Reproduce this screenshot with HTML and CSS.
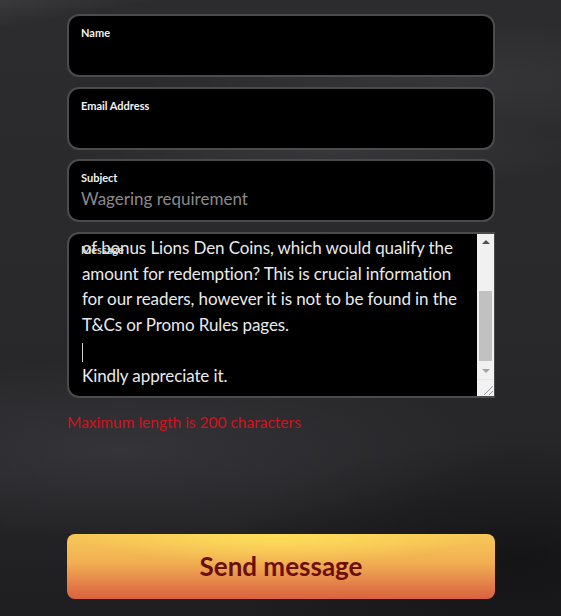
FILE: index.html
```html
<!DOCTYPE html>
<html lang="en">
<head>
<meta charset="utf-8">
<title>Contact form</title>
<link rel="stylesheet" href="styles.css">
</head>
<body>
<form class="form">
  <div class="field">
    <label class="label">Name</label>
  </div>
  <div class="field">
    <label class="label">Email Address</label>
  </div>
  <div class="field">
    <label class="label">Subject</label>
    <div class="value">Wagering requirement</div>
  </div>
  <div class="field field-message">
    <label class="label label-overlay">Message</label>
    <div class="message-text">
      <div class="line">of bonus Lions Den Coins, which would qualify the</div>
      <div class="line">amount for redemption? This is crucial information</div>
      <div class="line">for our readers, however it is not to be found in the</div>
      <div class="line">T&amp;Cs or Promo Rules pages.</div>
      <div class="line"><span class="caret"></span></div>
      <div class="line">Kindly appreciate it.</div>
    </div>
    <div class="scrollbar">
      <div class="sb-btn"><span class="arrow-up"></span></div>
      <div class="sb-track"><div class="sb-thumb"></div></div>
      <div class="sb-btn"><span class="arrow-down"></span></div>
      <div class="sb-corner">
        <svg width="15" height="15" viewBox="0 0 15 15"><path d="M14 5 L5 14 M14 10 L10 14" stroke="#9a9a9a" stroke-width="1"/></svg>
      </div>
    </div>
  </div>
  <div class="error">Maximum length is 200 characters</div>
  <button type="button" class="send">Send message</button>
</form>
</body>
</html>
```
FILE: styles.css
```css
html, body {
  margin: 0;
  padding: 0;
}
body {
  width: 561px;
  height: 616px;
  overflow: hidden;
  font-family: Lato, "Open Sans", sans-serif;
  background:
    linear-gradient(170deg, rgba(70,70,72,0.55) 0%, rgba(40,40,42,0) 4%),
    radial-gradient(ellipse 260px 40px at 330px 150px, rgba(80,80,84,0.35), rgba(0,0,0,0)),
    radial-gradient(ellipse 300px 60px at 450px 80px, rgba(70,70,74,0.4), rgba(0,0,0,0)),
    radial-gradient(ellipse 380px 90px at 120px 450px, rgba(70,70,76,0.45), rgba(0,0,0,0)),
    radial-gradient(ellipse 300px 120px at 520px 560px, rgba(10,10,12,0.55), rgba(0,0,0,0)),
    linear-gradient(180deg, #2c2c2f 0%, #29292c 50%, #252528 80%, #1e1e21 100%);
}
.form {
  display: flex;
  flex-direction: column;
  width: 428px;
  margin-left: 67px;
  padding-top: 14px;
}
.field {
  box-sizing: border-box;
  height: 63px;
  margin-bottom: 9.5px;
  background: #000;
  border: 2px solid #4b4b4e;
  border-radius: 12px;
  padding: 10px 12px 0 12px;
  display: flex;
  flex-direction: column;
}
.label {
  color: #f2f2f2;
  font-size: 11px;
  font-weight: 700;
  line-height: 14px;
}
.value {
  color: #8a8a8e;
  font-size: 17px;
  line-height: 22px;
  margin-top: 3px;
}
.field-message {
  position: relative;
  height: 166px;
  padding: 0 0 0 13px;
  flex-direction: row;
  border-top-right-radius: 0;
  border-bottom-right-radius: 0;
  border-right: 1px solid #4b4b4e;
  overflow: hidden;
  margin-bottom: 15px;
}
.label-overlay {
  position: absolute;
  left: 12px;
  top: 9px;
  color: #dcdcdc;
}
.message-text {
  flex: 1;
  padding-top: 1.5px;
  color: #eaeaec;
  font-size: 17px;
  letter-spacing: -0.1px;
}
.line {
  height: 25.6px;
  line-height: 25.6px;
  white-space: nowrap;
}
.caret {
  display: inline-block;
  width: 1px;
  height: 19px;
  background: #d0d0d0;
  vertical-align: middle;
}
.scrollbar {
  width: 17px;
  display: flex;
  flex-direction: column;
  background: #f1f1f1;
}
.sb-btn {
  height: 17px;
  display: flex;
  align-items: center;
  justify-content: center;
}
.arrow-up {
  width: 0;
  height: 0;
  border-left: 4px solid transparent;
  border-right: 4px solid transparent;
  border-bottom: 4px solid #505050;
}
.arrow-down {
  width: 0;
  height: 0;
  border-left: 4px solid transparent;
  border-right: 4px solid transparent;
  border-top: 4px solid #a3a3a3;
}
.sb-track {
  flex: 1;
  display: flex;
  flex-direction: column;
  padding: 41px 2px 2px 2px;
}
.sb-thumb {
  height: 70px;
  background: #c1c1c1;
}
.sb-corner {
  height: 17px;
  display: flex;
  align-items: flex-end;
  justify-content: flex-end;
  background: #f1f1f1;
  border-top: 1px solid #e6e6e6;
}
.error {
  color: #d2121c;
  font-size: 15.5px;
  line-height: 18px;
  height: 18px;
}
.send {
  margin-top: 103px;
  height: 65px;
  width: 428px;
  border: none;
  border-radius: 8px;
  font-family: Lato, "Open Sans", sans-serif;
  font-size: 26px;
  font-weight: 700;
  color: #6b0f0b;
  background:
    radial-gradient(ellipse 200px 30px at 50% 0%, rgba(255,226,90,0.9), rgba(255,226,90,0)),
    linear-gradient(180deg, #f8c857 0%, #f1ae52 45%, #e27c48 80%, #d9623f 100%);
  padding: 0;
}
```
